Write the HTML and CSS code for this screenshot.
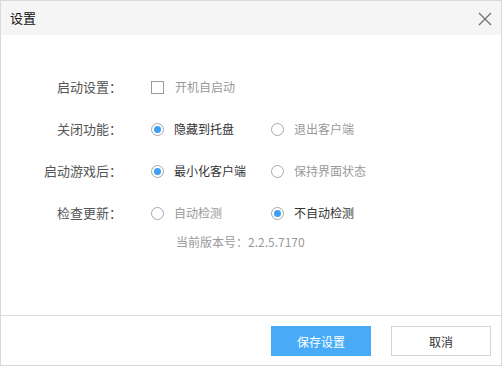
FILE: index.html
```html
<!DOCTYPE html>
<html lang="zh">
<head>
<meta charset="utf-8">
<title>设置</title>
<link rel="stylesheet" href="styles.css">
</head>
<body>
<div class="dialog">
  <div class="header">
    <span class="title">设置</span>
    <svg class="close" width="14" height="14" viewBox="0 0 14 14"><path d="M1 1L13 13M13 1L1 13" stroke="#707070" stroke-width="1.3" fill="none"/></svg>
  </div>
  <div class="content">
    <div class="row">
      <div class="label">启动设置：</div>
      <div class="opt"><span class="check"></span><span class="txt">开机自启动</span></div>
    </div>
    <div class="row">
      <div class="label">关闭功能：</div>
      <div class="opt"><span class="radio on"></span><span class="txt on">隐藏到托盘</span></div>
      <div class="opt"><span class="radio"></span><span class="txt">退出客户端</span></div>
    </div>
    <div class="row">
      <div class="label">启动游戏后：</div>
      <div class="opt"><span class="radio on"></span><span class="txt on">最小化客户端</span></div>
      <div class="opt"><span class="radio"></span><span class="txt">保持界面状态</span></div>
    </div>
    <div class="row">
      <div class="label">检查更新：</div>
      <div class="opt"><span class="radio"></span><span class="txt">自动检测</span></div>
      <div class="opt"><span class="radio on"></span><span class="txt on">不自动检测</span></div>
    </div>
    <div class="version">当前版本号：2.2.5.7170</div>
  </div>
  <div class="footer">
    <button class="btn primary">保存设置</button>
    <button class="btn">取消</button>
  </div>
</div>
</body>
</html>
```

FILE: styles.css
```css
html, body {
  margin: 0;
  padding: 0;
  background: #fff;
}
body {
  font-family: "Noto Sans CJK SC", "Noto Sans", sans-serif;
  font-size: 13px;
  color: #333;
}
.dialog {
  width: 502px;
  height: 366px;
  box-sizing: border-box;
  border: 1px solid #d6d9df;
  display: flex;
  flex-direction: column;
}
.header {
  height: 34px;
  background: #f5f5f5;
  display: flex;
  align-items: center;
  justify-content: space-between;
  padding: 0 9px 0 9px;
  flex-shrink: 0;
}
.title {
  font-size: 13px;
  color: #111;
  line-height: 16px;
  margin-top: -1px;
}
.close {
  display: block;
  margin-top: 1px;
}
.content {
  flex: 1;
  padding-top: 31px;
}
.row {
  display: flex;
  align-items: center;
  height: 42px;
}
.label {
  width: 121px;
  text-align: right;
  color: #555;
  line-height: 16px;
  margin-right: 29px;
}
.opt {
  display: flex;
  align-items: center;
  width: 120px;
}
.check {
  width: 11px;
  height: 11px;
  border: 1px solid #9a9a9a;
  margin-right: 11px;
  margin-top: 1px;
}
.radio {
  width: 11px;
  height: 11px;
  border: 1px solid #a8a8a8;
  border-radius: 50%;
  margin-right: 10px;
  position: relative;
  box-sizing: content-box;
}
.radio.on::after {
  content: "";
  position: absolute;
  left: 2px;
  top: 2px;
  width: 7px;
  height: 7px;
  border-radius: 50%;
  background: #3d9ff5;
}
.txt {
  color: #999;
  font-size: 12px;
  line-height: 16px;
}
.txt.on {
  color: #333;
}
.version {
  padding-left: 175px;
  color: #999;
  font-size: 12px;
  line-height: 16px;
  margin-top: 0px;
}
.footer {
  height: 50px;
  border-top: 1px solid #dcdcdc;
  display: flex;
  justify-content: flex-end;
  align-items: flex-start;
  gap: 20px;
  padding: 10px 10px 0 0;
  box-sizing: border-box;
  flex-shrink: 0;
}
.btn {
  width: 100px;
  height: 30px;
  border: 1px solid #d4d4d4;
  background: #fff;
  font-family: "Noto Sans CJK SC", "Noto Sans", sans-serif;
  font-size: 12px;
  color: #333;
  padding: 0;
}
.btn.primary {
  background: #48abf8;
  border-color: #48abf8;
  color: #fff;
}
```
